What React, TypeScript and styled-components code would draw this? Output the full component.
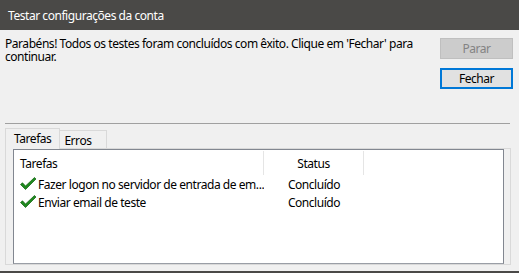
import styled, { createGlobalStyle } from 'styled-components';

const GlobalStyle = createGlobalStyle`
  html, body {
    margin: 0;
    padding: 0;
    background: #f0f0f0;
    overflow: hidden;
  }
  body {
    font-family: "Noto Sans", "Open Sans", sans-serif;
    font-size: 12px;
    letter-spacing: -0.45px;
    color: #000;
  }
`;

const Window = styled.div`
  width: 519px;
  height: 273px;
  display: flex;
  flex-direction: column;
  background: #f0f0f0;
  box-sizing: border-box;
  border-bottom: 2px solid #4a4947;
`;

const TitleBar = styled.div`
  height: 30px;
  flex: none;
  background: #4a4947;
  color: #ffffff;
  display: flex;
  align-items: center;
  padding-left: 8px;
  font-size: 12px;
`;

const TopArea = styled.div`
  height: 93px;
  flex: none;
  display: flex;
  justify-content: space-between;
  padding: 7px 6px 0 5px;
  box-sizing: border-box;
`;

const Message = styled.div`
  width: 420px;
  line-height: 13px;
`;

const ButtonColumn = styled.div`
  display: flex;
  flex-direction: column;
  gap: 9px;
  padding-top: 1px;
`;

const Button = styled.button<{ $disabled?: boolean; $focused?: boolean }>`
  width: 73px;
  height: 21px;
  box-sizing: border-box;
  font-family: inherit;
  font-size: 12px;
  letter-spacing: inherit;
  padding: 0;
  background: ${p => (p.$disabled ? '#cccccc' : '#e1e1e1')};
  color: ${p => (p.$disabled ? '#838383' : '#000')};
  border: ${p => (p.$focused ? '2px solid #0078d7' : '1px solid #bfbfbf')};
`;

const Separator = styled.div`
  height: 1px;
  flex: none;
  margin: 0 9px 0 5px;
  background: #a0a0a0;
`;

const TabStrip = styled.div`
  display: flex;
  flex: none;
  align-items: flex-end;
  height: 20px;
  margin: 4px 0 0 5px;
`;

const Tab = styled.div<{ $active?: boolean }>`
  box-sizing: border-box;
  height: ${p => (p.$active ? '21px' : '18px')};
  padding: ${p => (p.$active ? '2px 8px 0 8px' : '2px 14px 0 4px')};
  border: 1px solid #d9d9d9;
  border-bottom: none;
  border-left: ${p => (p.$active ? '1px solid #d9d9d9' : 'none')};
  background: #f0f0f0;
  margin-bottom: ${p => (p.$active ? '-1px' : '0')};
  position: relative;
  z-index: ${p => (p.$active ? 1 : 0)};
  line-height: 16px;
`;

const TabPanel = styled.div`
  height: 117px;
  flex: none;
  margin: 0 8px 0 5px;
  border: 1px solid #d9d9d9;
  padding: 0 6px 0 7px;
  box-sizing: border-box;
  display: flex;
`;

const ListBox = styled.div`
  flex: 1;
  background: #ffffff;
  border: 1px solid #828790;
  border-bottom-color: #9a9ea6;
  display: flex;
  flex-direction: column;
`;

const Row = styled.div<{ $header?: boolean }>`
  display: grid;
  grid-template-columns: 250px 100px 1fr;
  height: ${p => (p.$header ? '25px' : '18px')};
  align-items: center;
`;

const Cell = styled.div<{ $center?: boolean; $divider?: boolean }>`
  display: flex;
  align-items: center;
  gap: 2px;
  height: 100%;
  padding-left: ${p => (p.$center ? '0' : '6px')};
  justify-content: ${p => (p.$center ? 'center' : 'flex-start')};
  border-right: ${p => (p.$divider ? '1px solid #e5e5e5' : 'none')};
  white-space: nowrap;
  overflow: hidden;
  box-sizing: border-box;

  svg {
    flex: none;
  }
`;

const HeaderCell = styled(Cell)`
  height: 24px;
  margin-top: 1px;
`;

const Check = () => (
  <svg width="16" height="16" viewBox="0 0 16 16">
    <path d="M0.5 8.5 L2.5 6.8 L5.5 10 L14.5 1.5 L16 3 L5.5 13.5 Z" fill="#1f8a1f" stroke="#0d5e0d" strokeWidth="0.7" />
  </svg>
);

const tasks = [
  { name: 'Fazer logon no servidor de entrada de em...', status: 'Concluído' },
  { name: 'Enviar email de teste', status: 'Concluído' },
];

export default function App() {
  return (
    <>
      <GlobalStyle />
      <Window>
        <TitleBar>Testar configurações da conta</TitleBar>
        <TopArea>
          <Message>
            Parabéns! Todos os testes foram concluídos com êxito. Clique em 'Fechar' para continuar.
          </Message>
          <ButtonColumn>
            <Button $disabled>Parar</Button>
            <Button $focused>Fechar</Button>
          </ButtonColumn>
        </TopArea>
        <Separator />
        <TabStrip>
          <Tab $active>Tarefas</Tab>
          <Tab>Erros</Tab>
        </TabStrip>
        <TabPanel>
          <ListBox>
            <Row $header>
              <HeaderCell $divider>Tarefas</HeaderCell>
              <HeaderCell $center $divider>Status</HeaderCell>
              <HeaderCell />
            </Row>
            {tasks.map(t => (
              <Row key={t.name}>
                <Cell>
                  <Check />
                  {t.name}
                </Cell>
                <Cell $center>{t.status}</Cell>
                <Cell />
              </Row>
            ))}
          </ListBox>
        </TabPanel>
      </Window>
    </>
  );
}
